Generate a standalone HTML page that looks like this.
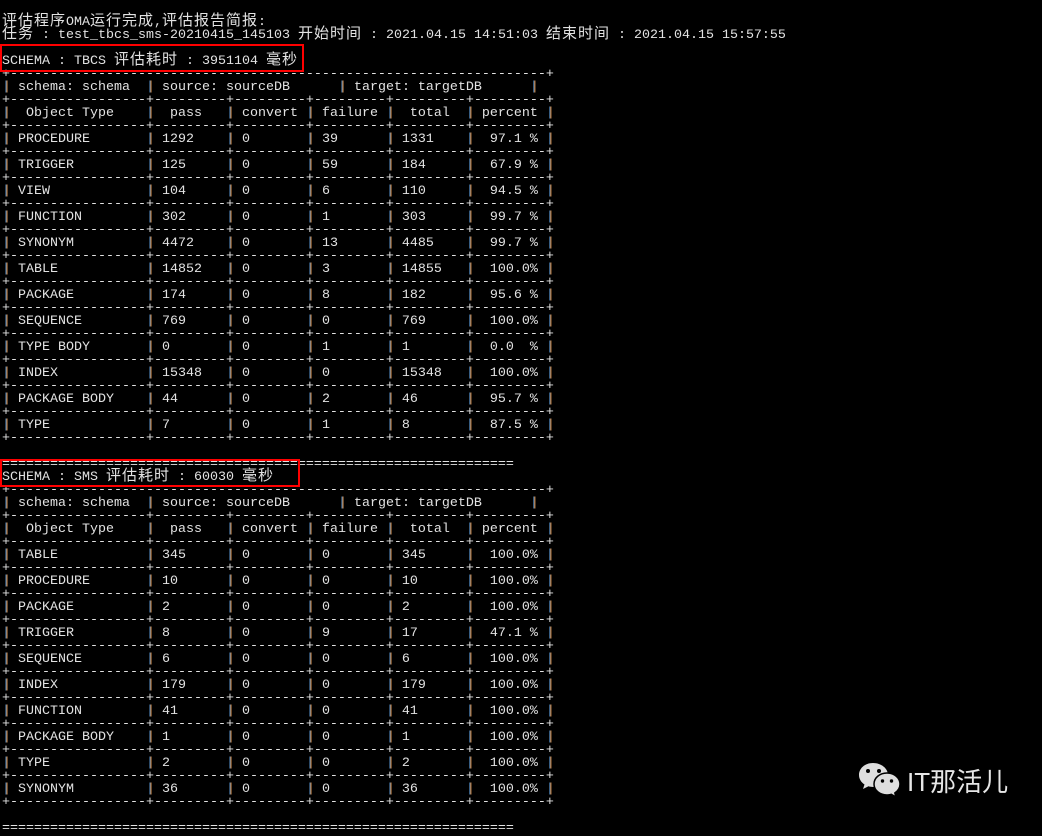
<!DOCTYPE html>
<html lang="zh">
<head>
<meta charset="utf-8">
<title>评估报告</title>
<style>
html,body{margin:0;padding:0;background:#000;width:1042px;height:828px;overflow:hidden}
pre{position:absolute;left:2px;top:16px;margin:0;font:13.33px/13px "Liberation Mono",monospace;color:#e2e2e2;white-space:pre}
pre u{text-decoration:none;font-family:"Noto Sans CJK SC",sans-serif;font-size:15px;letter-spacing:1px;line-height:1px}
pre i{font-style:normal;position:relative;left:1px;color:#d08a48;text-shadow:-1px 0 0 #4f86bd}
.box{position:absolute;border:2px solid #f00;box-sizing:border-box}
.logo{position:absolute;left:907px;top:767px;font-family:"Liberation Sans","Noto Sans CJK SC",sans-serif;font-size:26px;line-height:30px;color:#e6e6e6;white-space:nowrap}
svg{position:absolute;left:850px;top:755px}
</style>
</head>
<body>
<pre><u>评估程序</u>OMA<u>运行完成</u>,<u>评估报告简报</u>:
<u>任务</u> : test_tbcs_sms-20210415_145103 <u>开始时间</u> : 2021.04.15 14:51:03 <u>结束时间</u> : 2021.04.15 15:57:55

SCHEMA : TBCS <u>评估耗时</u> : 3951104 <u>毫秒</u>
+-------------------------------------------------------------------+
<i>|</i> schema: schema  <i>|</i> source: sourceDB      <i>|</i> target: targetDB      <i>|</i>
+-----------------+---------+---------+---------+---------+---------+
<i>|</i>  Object Type    <i>|</i>  pass   <i>|</i> convert <i>|</i> failure <i>|</i>  total  <i>|</i> percent <i>|</i>
+-----------------+---------+---------+---------+---------+---------+
<i>|</i> PROCEDURE       <i>|</i> 1292    <i>|</i> 0       <i>|</i> 39      <i>|</i> 1331    <i>|</i>  97.1 % <i>|</i>
+-----------------+---------+---------+---------+---------+---------+
<i>|</i> TRIGGER         <i>|</i> 125     <i>|</i> 0       <i>|</i> 59      <i>|</i> 184     <i>|</i>  67.9 % <i>|</i>
+-----------------+---------+---------+---------+---------+---------+
<i>|</i> VIEW            <i>|</i> 104     <i>|</i> 0       <i>|</i> 6       <i>|</i> 110     <i>|</i>  94.5 % <i>|</i>
+-----------------+---------+---------+---------+---------+---------+
<i>|</i> FUNCTION        <i>|</i> 302     <i>|</i> 0       <i>|</i> 1       <i>|</i> 303     <i>|</i>  99.7 % <i>|</i>
+-----------------+---------+---------+---------+---------+---------+
<i>|</i> SYNONYM         <i>|</i> 4472    <i>|</i> 0       <i>|</i> 13      <i>|</i> 4485    <i>|</i>  99.7 % <i>|</i>
+-----------------+---------+---------+---------+---------+---------+
<i>|</i> TABLE           <i>|</i> 14852   <i>|</i> 0       <i>|</i> 3       <i>|</i> 14855   <i>|</i>  100.0% <i>|</i>
+-----------------+---------+---------+---------+---------+---------+
<i>|</i> PACKAGE         <i>|</i> 174     <i>|</i> 0       <i>|</i> 8       <i>|</i> 182     <i>|</i>  95.6 % <i>|</i>
+-----------------+---------+---------+---------+---------+---------+
<i>|</i> SEQUENCE        <i>|</i> 769     <i>|</i> 0       <i>|</i> 0       <i>|</i> 769     <i>|</i>  100.0% <i>|</i>
+-----------------+---------+---------+---------+---------+---------+
<i>|</i> TYPE BODY       <i>|</i> 0       <i>|</i> 0       <i>|</i> 1       <i>|</i> 1       <i>|</i>  0.0  % <i>|</i>
+-----------------+---------+---------+---------+---------+---------+
<i>|</i> INDEX           <i>|</i> 15348   <i>|</i> 0       <i>|</i> 0       <i>|</i> 15348   <i>|</i>  100.0% <i>|</i>
+-----------------+---------+---------+---------+---------+---------+
<i>|</i> PACKAGE BODY    <i>|</i> 44      <i>|</i> 0       <i>|</i> 2       <i>|</i> 46      <i>|</i>  95.7 % <i>|</i>
+-----------------+---------+---------+---------+---------+---------+
<i>|</i> TYPE            <i>|</i> 7       <i>|</i> 0       <i>|</i> 1       <i>|</i> 8       <i>|</i>  87.5 % <i>|</i>
+-----------------+---------+---------+---------+---------+---------+

================================================================
SCHEMA : SMS <u>评估耗时</u> : 60030 <u>毫秒</u>
+-------------------------------------------------------------------+
<i>|</i> schema: schema  <i>|</i> source: sourceDB      <i>|</i> target: targetDB      <i>|</i>
+-----------------+---------+---------+---------+---------+---------+
<i>|</i>  Object Type    <i>|</i>  pass   <i>|</i> convert <i>|</i> failure <i>|</i>  total  <i>|</i> percent <i>|</i>
+-----------------+---------+---------+---------+---------+---------+
<i>|</i> TABLE           <i>|</i> 345     <i>|</i> 0       <i>|</i> 0       <i>|</i> 345     <i>|</i>  100.0% <i>|</i>
+-----------------+---------+---------+---------+---------+---------+
<i>|</i> PROCEDURE       <i>|</i> 10      <i>|</i> 0       <i>|</i> 0       <i>|</i> 10      <i>|</i>  100.0% <i>|</i>
+-----------------+---------+---------+---------+---------+---------+
<i>|</i> PACKAGE         <i>|</i> 2       <i>|</i> 0       <i>|</i> 0       <i>|</i> 2       <i>|</i>  100.0% <i>|</i>
+-----------------+---------+---------+---------+---------+---------+
<i>|</i> TRIGGER         <i>|</i> 8       <i>|</i> 0       <i>|</i> 9       <i>|</i> 17      <i>|</i>  47.1 % <i>|</i>
+-----------------+---------+---------+---------+---------+---------+
<i>|</i> SEQUENCE        <i>|</i> 6       <i>|</i> 0       <i>|</i> 0       <i>|</i> 6       <i>|</i>  100.0% <i>|</i>
+-----------------+---------+---------+---------+---------+---------+
<i>|</i> INDEX           <i>|</i> 179     <i>|</i> 0       <i>|</i> 0       <i>|</i> 179     <i>|</i>  100.0% <i>|</i>
+-----------------+---------+---------+---------+---------+---------+
<i>|</i> FUNCTION        <i>|</i> 41      <i>|</i> 0       <i>|</i> 0       <i>|</i> 41      <i>|</i>  100.0% <i>|</i>
+-----------------+---------+---------+---------+---------+---------+
<i>|</i> PACKAGE BODY    <i>|</i> 1       <i>|</i> 0       <i>|</i> 0       <i>|</i> 1       <i>|</i>  100.0% <i>|</i>
+-----------------+---------+---------+---------+---------+---------+
<i>|</i> TYPE            <i>|</i> 2       <i>|</i> 0       <i>|</i> 0       <i>|</i> 2       <i>|</i>  100.0% <i>|</i>
+-----------------+---------+---------+---------+---------+---------+
<i>|</i> SYNONYM         <i>|</i> 36      <i>|</i> 0       <i>|</i> 0       <i>|</i> 36      <i>|</i>  100.0% <i>|</i>
+-----------------+---------+---------+---------+---------+---------+

================================================================</pre>
<div class="box" style="left:0;top:44px;width:304px;height:28px"></div>
<div class="box" style="left:0;top:459px;width:300px;height:28px"></div>
<svg width="60" height="48" viewBox="0 0 60 48">
<path d="M23 8C14.700 8 9 13.500 9 20C9 24 11.200 27.300 14.500 29.500L13 34L18.500 31.300C20 31.800 21.500 32 23 32C31.300 32 38 26.600 38 20C38 13.500 31.300 8 23 8Z" fill="#dedede"/>
<circle cx="18" cy="16" r="2" fill="#000"/><circle cx="29" cy="16" r="2" fill="#000"/>
<path d="M37 18C29.500 18 24 23 24 29C24 35 29.500 40 37 40C38.500 40 40 39.800 41.300 39.300L46 42L44.800 38C47.800 36 50 32.800 50 29C50 23 44.500 18 37 18Z" fill="#dedede" stroke="#000" stroke-width="1.500"/>
<circle cx="32.500" cy="26" r="1.700" fill="#000"/><circle cx="41.500" cy="26" r="1.700" fill="#000"/>
</svg>
<div class="logo">IT那活儿</div>
</body>
</html>
